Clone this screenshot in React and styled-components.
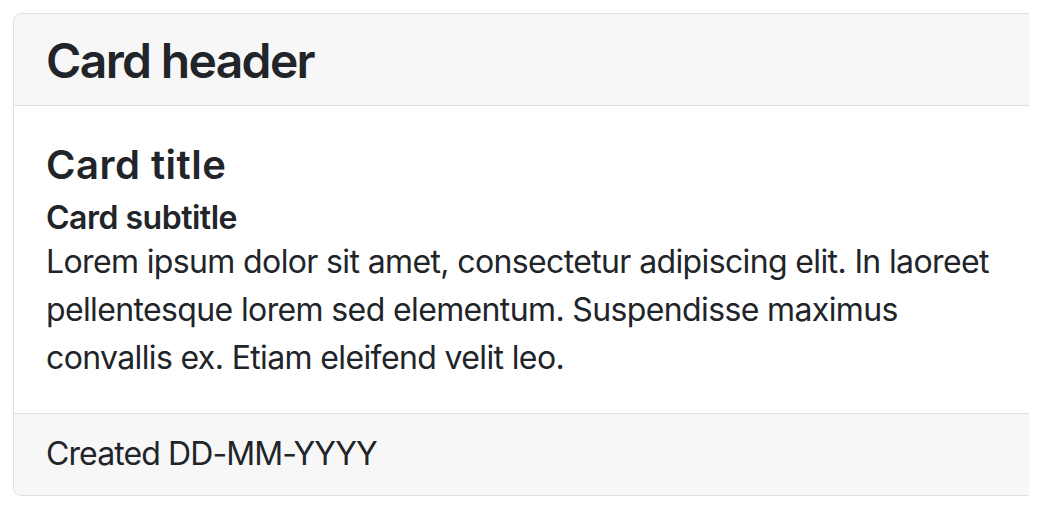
import React from 'react';
import styled, { createGlobalStyle } from 'styled-components';

const GlobalStyle = createGlobalStyle`
  html, body {
    margin: 0;
    background: #fff;
  }
  body {
    font-family: Inter, "Liberation Sans", Arial, sans-serif;
    color: #212529;
  }
`;

const Page = styled.div`
  padding: 13px 13px 0 13px;
`;

const Clip = styled.div`
  overflow: hidden;
  width: 1016px;
`;

const Card = styled.div`
  width: 1100px;
  border: 1px solid #dfdfdf;
  border-radius: 8px;
  background: #fff;
  overflow: hidden;
`;

const Header = styled.div`
  background: #f7f7f7;
  border-bottom: 1px solid #dfdfdf;
  padding: 18px 32px 15px;
`;

const HeaderTitle = styled.h4`
  margin: 0;
  font-size: 48px;
  font-weight: 600;
  line-height: 1.2;
  letter-spacing: -1.65px;
`;

const Body = styled.div`
  padding: 35px 32px 31px;
`;

const Title = styled.h5`
  margin: 0 0 16px;
  font-size: 40px;
  font-weight: 600;
  line-height: 1.2;
  letter-spacing: 0.5px;
`;

const Subtitle = styled.h6`
  margin: -6px 0 1px;
  font-size: 32px;
  font-weight: 600;
  line-height: 1.2;
  letter-spacing: -0.5px;
`;

const Text = styled.p`
  margin: 0;
  font-size: 32px;
  line-height: 48px;
  letter-spacing: -0.63px;
`;

const Footer = styled.div`
  background: #f7f7f7;
  border-top: 1px solid #dfdfdf;
  padding: 16px 32px 17px;
  font-size: 32px;
  line-height: 48px;
  letter-spacing: -0.9px;
`;

export default function App() {
  return (
    <>
      <GlobalStyle />
      <Page>
        <Clip>
          <Card>
            <Header>
              <HeaderTitle>Card header</HeaderTitle>
            </Header>
            <Body>
              <Title>Card title</Title>
              <Subtitle>Card subtitle</Subtitle>
              <Text>
                Lorem ipsum dolor sit amet, consectetur adipiscing elit. In laoreet
                <br />
                pellentesque lorem sed elementum. Suspendisse maximus
                <br />
                convallis ex. Etiam eleifend velit leo.
              </Text>
            </Body>
            <Footer>Created DD-MM-YYYY</Footer>
          </Card>
        </Clip>
      </Page>
    </>
  );
}
